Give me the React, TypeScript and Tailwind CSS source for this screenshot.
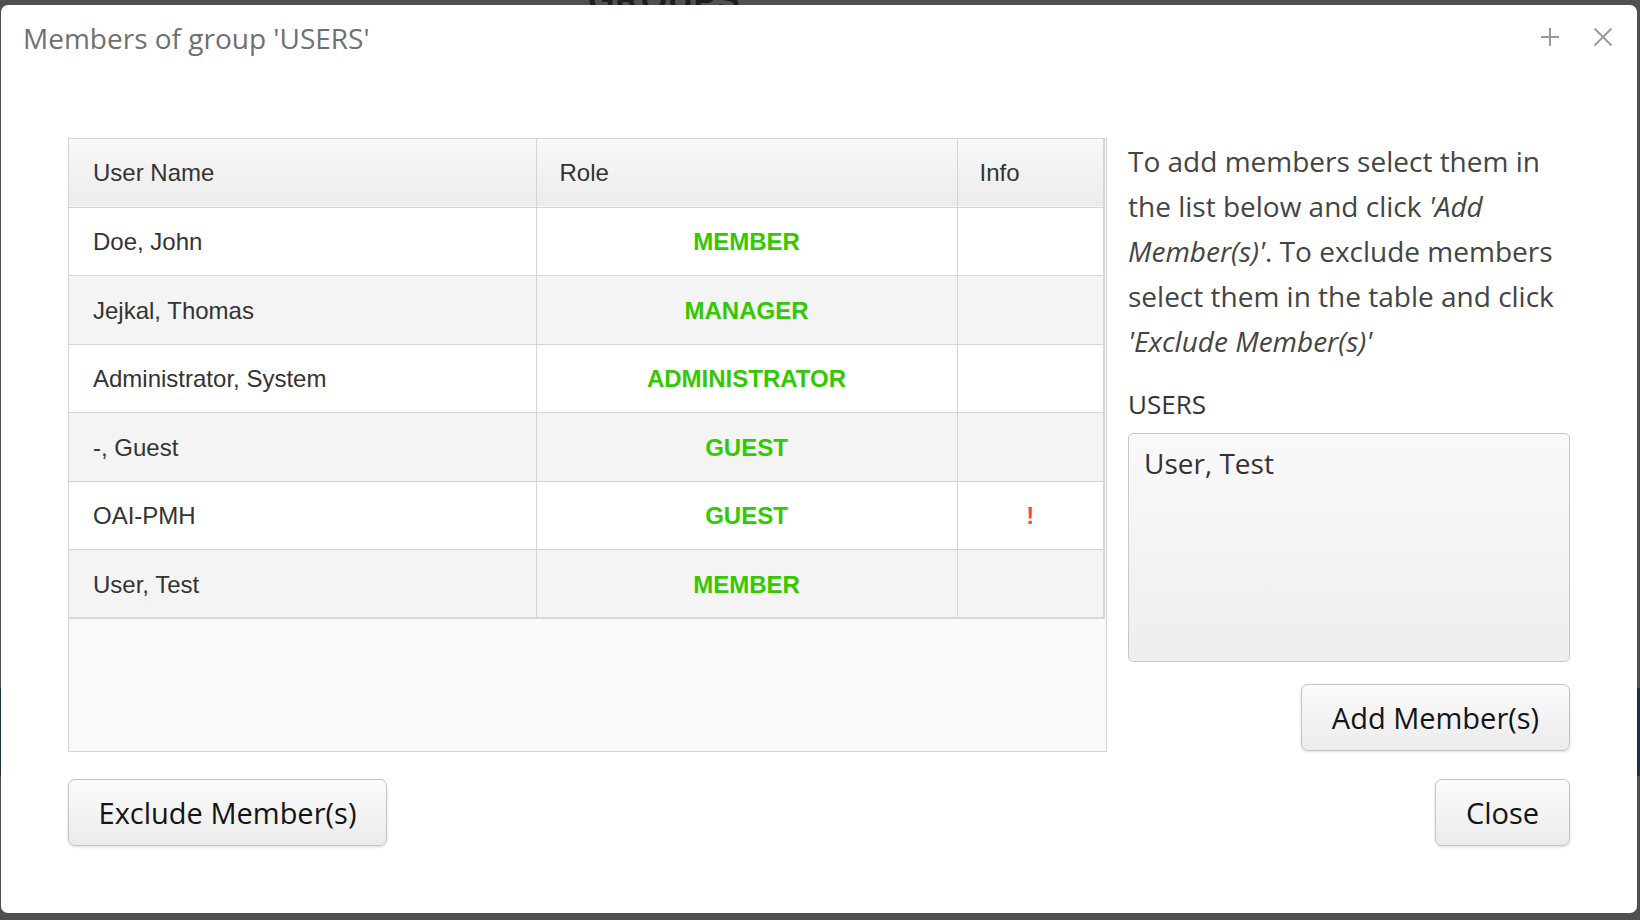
import React from "react";

type Member = { name: string; role: string; warn?: boolean };

const members: Member[] = [
  { name: "Doe, John", role: "MEMBER" },
  { name: "Jejkal, Thomas", role: "MANAGER" },
  { name: "Administrator, System", role: "ADMINISTRATOR" },
  { name: "-, Guest", role: "GUEST" },
  { name: "OAI-PMH", role: "GUEST", warn: true },
  { name: "User, Test", role: "MEMBER" },
];

const btn =
  "h-[67px] rounded-[7px] border border-[#c4c4c4] bg-linear-to-b from-[#fbfbfb] to-[#ebebeb] text-center text-[29px] text-[#141414] shadow-[0_1px_3px_rgba(0,0,0,0.14)] font-['Open_Sans',sans-serif]";

function PlusIcon() {
  return (
    <svg width="20" height="20" viewBox="0 0 20 20" fill="none" stroke="#9a9a9a" strokeWidth="2">
      <path d="M10 1v18M1 10h18" />
    </svg>
  );
}

function CloseIcon() {
  return (
    <svg width="20" height="20" viewBox="0 0 20 20" fill="none" stroke="#9a9a9a" strokeWidth="2">
      <path d="M1.5 1.5l17 17M18.5 1.5l-17 17" />
    </svg>
  );
}

export default function App() {
  return (
    <div className="relative h-[920px] w-[1640px] overflow-hidden bg-[#505050]">
      {/* page behind the modal */}
      <div className="absolute left-[588px] top-[-26px] text-[34px] font-bold tracking-wide text-[#1e1e1e] font-['Liberation_Sans',Arial,sans-serif]">
        GROUPS
      </div>
      <div className="absolute left-0 top-[688px] h-[88px] w-full bg-[#1f3348]" />

      <div className="absolute left-[1px] top-[5px] flex h-[908px] w-[1636px] flex-col rounded-[7px] bg-white">
        <div className="flex h-[52px] items-end justify-between pl-[22px] pr-[24px]">
          <h1 className="text-[28px] leading-[38px] text-[#707070] font-['Open_Sans',sans-serif]">
            Members of group 'USERS'
          </h1>
          <div className="flex items-center gap-[33px] pb-[10px]">
            <PlusIcon />
            <CloseIcon />
          </div>
        </div>

        <div className="mt-[81px] flex gap-[21px] px-[67px]">
          <div className="h-[614px] w-[1039px] border border-[#d4d4d4] bg-[#f9f9f9]">
            <table className="w-[1036px] border-collapse border-r-2 border-b-2 border-[#d6d6d6] text-[24px] text-[#333] font-['Liberation_Sans',Arial,sans-serif]">
              <thead>
                <tr className="h-[68px] border-b border-[#d4d4d4] bg-linear-to-b from-[#f8f8f8] to-[#ececec]">
                  <th className="w-[467px] border-r border-[#d4d4d4] pl-[24px] text-left font-normal">User Name</th>
                  <th className="w-[421px] border-r border-[#d4d4d4] pl-[23px] text-left font-normal">Role</th>
                  <th className="pl-[22px] text-left font-normal">Info</th>
                </tr>
              </thead>
              <tbody>
                {members.map((m, i) => (
                  <tr
                    key={m.name}
                    className={
                      "h-[68.5px] border-b border-[#d4d4d4] " + (i % 2 === 0 ? "bg-white" : "bg-[#f4f4f4]")
                    }
                  >
                    <td className="border-r border-[#d4d4d4] pl-[24px] pt-[2px]">{m.name}</td>
                    <td className="border-r border-[#d4d4d4] pt-[2px] text-center font-bold text-[#33c800]">{m.role}</td>
                    <td className="pt-[2px] text-center font-bold text-[#ff4545]">{m.warn ? "!" : ""}</td>
                  </tr>
                ))}
              </tbody>
            </table>
          </div>

          <div className="flex w-[442px] flex-col font-['Open_Sans',sans-serif]">
            <p className="pt-[1px] text-[28px] leading-[45px] text-[#444]">
              To add members select them in the list below and click <i>'Add Member(s)'</i>. To exclude members
              select them in the table and click <i>'Exclude Member(s)'</i>
            </p>
            <div className="mt-[23px] text-[26px] leading-[35px] text-[#333]">USERS</div>
            <div className="mt-[11px] h-[229px] rounded-[5px] border border-[#c8c8c8] bg-linear-to-b from-[#f9f9f9] to-[#eeeeee] px-[15px] pt-[10px]">
              <div className="text-[28px] leading-[38px] text-[#333]">User, Test</div>
            </div>
            <div className="mt-[22px] flex justify-end">
              <button type="button" className={btn + " w-[269px]"}>
                Add Member(s)
              </button>
            </div>
          </div>
        </div>

        <div className="mt-[27px] flex justify-between px-[67px]">
          <button type="button" className={btn + " w-[319px]"}>
            Exclude Member(s)
          </button>
          <button type="button" className={btn + " w-[135px]"}>
            Close
          </button>
        </div>
      </div>
    </div>
  );
}
